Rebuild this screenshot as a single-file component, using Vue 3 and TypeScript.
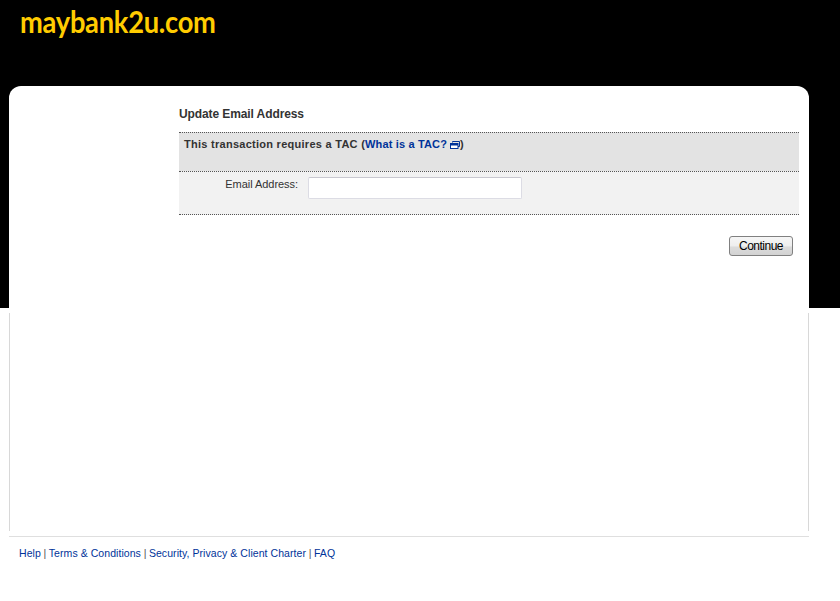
<script setup lang="ts">
const links: string[] = ['Help', 'Terms & Conditions', 'Security, Privacy & Client Charter', 'FAQ']
</script>

<template>
  <div class="page">
    <header class="top">
      <div class="logo"><span class="logo-text">maybank2u.com</span></div>
      <main class="card">
        <div class="content">
          <h1 class="title">Update Email Address</h1>
          <div class="notice">
            This transaction requires a TAC (<a class="tac">What is a TAC?<svg class="popup" width="10" height="8" viewBox="0 0 10 8" aria-hidden="true">
                <path d="M2.500 1.500V.5h7v5H8" fill="none" stroke="#003399" />
                <rect x="0.500" y="2.500" width="7.500" height="5" fill="#fff" stroke="#003399" />
                <path d="M1 3h7v1.500H1z" fill="#003399" />
              </svg></a>)
          </div>
          <div class="form-row">
            <label class="field-label" for="email">Email Address:</label>
            <input id="email" class="field" type="text" />
          </div>
          <div class="actions">
            <button class="continue" type="button">Continue</button>
          </div>
        </div>
      </main>
    </header>
    <section class="lower"></section>
    <footer class="footer">
      <template v-for="(l, i) in links" :key="l">
        <a class="foot-link">{{ l }}</a><span v-if="i < links.length - 1" class="sep"> | </span>
      </template>
    </footer>
  </div>
</template>

<style scoped>
.page {
  width: 840px;
  height: 601px;
  background: #fff;
  font-family: "Liberation Sans", Arial, sans-serif;
  font-size: 12px;
  color: #333;
  overflow: hidden;
}
.top {
  height: 308px;
  background: #000;
  padding: 0 31px 0 9px;
  box-sizing: border-box;
  display: flex;
  flex-direction: column;
}
.logo {
  height: 86px;
  padding: 3px 0 0 11px;
  box-sizing: border-box;
  font-family: Lato, sans-serif;
  font-size: 31px;
  line-height: 36px;
  font-weight: 700;
  color: #ffcc00;
}
.logo-text {
  display: inline-block;
  transform: scaleX(0.88);
  transform-origin: left center;
  letter-spacing: -0.3px;
}
.card {
  flex: 1;
  background: #fff;
  border-radius: 12px 12px 0 0;
  padding: 21px 10px 0 170px;
}
.title {
  margin: 0 0 10px;
  font-size: 12px;
  line-height: 15px;
  font-weight: bold;
  letter-spacing: -0.1px;
  color: #333;
}
.notice {
  height: 39px;
  box-sizing: border-box;
  background: #e3e3e3;
  border-top: 1px dotted #555;
  padding: 4px 5px 0;
  font-size: 11px;
  line-height: 14px;
  font-weight: bold;
  letter-spacing: 0.27px;
}
.tac {
  color: #003399;
  letter-spacing: 0.15px;
}
.popup {
  margin-left: 3px;
  vertical-align: -1px;
}
.form-row {
  height: 44px;
  box-sizing: border-box;
  background: #f2f2f2;
  border-top: 1px dotted #555;
  border-bottom: 1px dotted #555;
  display: flex;
  align-items: flex-start;
}
.field-label {
  width: 119px;
  text-align: right;
  margin-top: 5px;
  line-height: 14px;
  font-size: 11px;
  letter-spacing: -0.05px;
}
.field {
  width: 214px;
  height: 22px;
  box-sizing: border-box;
  margin: 5px 0 0 10px;
  padding: 0 4px;
  background: #fff;
  border: 1px solid #dcdce4;
  border-top-color: #c8c8d0;
  border-radius: 2px;
  outline: none;
}
.actions {
  display: flex;
  justify-content: flex-end;
  padding: 21px 6px 0 0;
}
.continue {
  width: 64px;
  height: 20px;
  padding: 0;
  border: 1px solid #808080;
  border-radius: 3px;
  background: linear-gradient(#f6f6f6 0%, #eeeeee 50%, #dcdcdc 55%, #d2d2d2 100%);
  font-family: "Liberation Sans", Arial, sans-serif;
  font-size: 12px;
  letter-spacing: -0.5px;
  color: #000;
}
.lower {
  height: 218px;
  margin: 5px 31px 0 9px;
  border-left: 1px solid #d8d8d8;
  border-right: 1px solid #d8d8d8;
}
.footer {
  margin: 5px 31px 0 9px;
  border-top: 1px solid #dfdfdf;
  padding: 9px 0 0 10px;
  font-size: 10.500px;
  line-height: 14px;
}
.foot-link {
  color: #003399;
  letter-spacing: 0.06px;
}
.sep {
  color: #555;
  letter-spacing: -0.2px;
}
</style>
